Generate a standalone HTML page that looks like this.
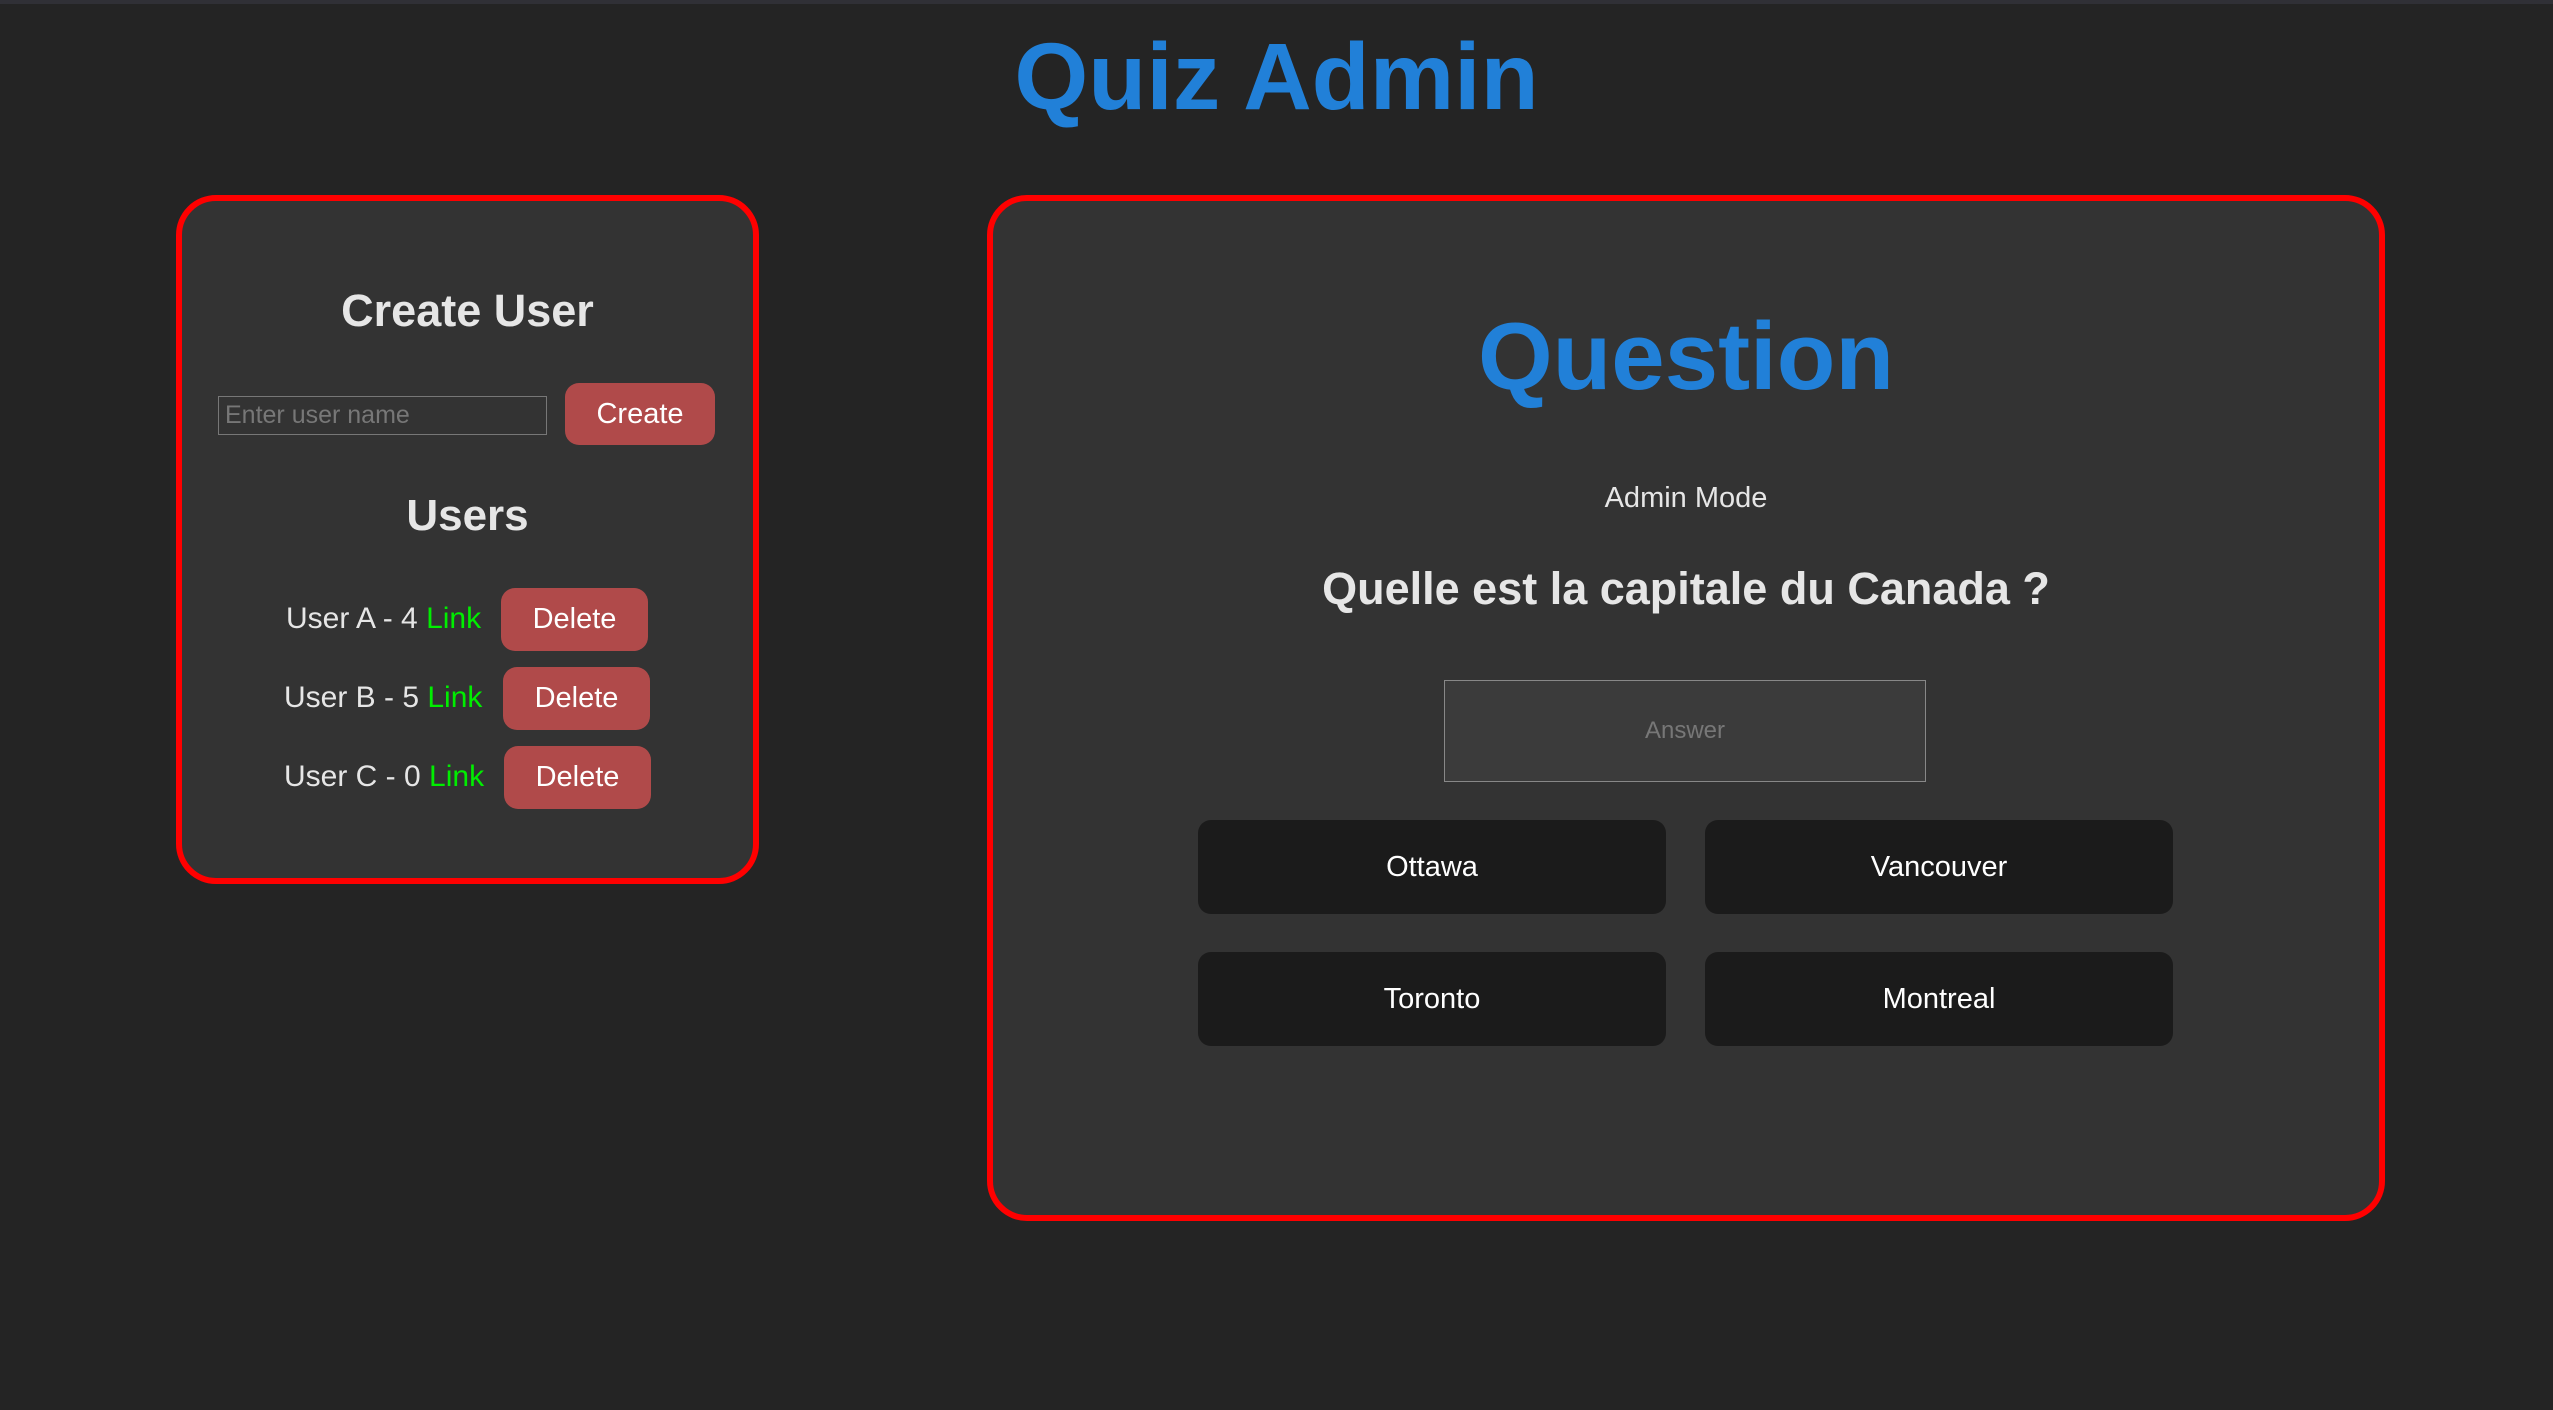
<!DOCTYPE html>
<html><head><style>
*{margin:0;padding:0;box-sizing:border-box}
body{width:2553px;height:1410px;background:#242424;font-family:"Liberation Sans",Arial,sans-serif;position:relative;overflow:hidden;color:#e6e6e6}
.top{position:absolute;left:0;top:0;width:100%;height:4px;background:#303036}
.abs{position:absolute}
h1{position:absolute;left:0;width:100%;top:22px;text-align:center;font-size:95px;font-weight:bold;color:#2180d8;line-height:110px}
.card{position:absolute;background:#333;border:6px solid #ff0000;border-radius:40px}
.ctr{position:absolute;text-align:center;white-space:nowrap}
.btn{position:absolute;background:#b04a4a;border-radius:14px;color:#fff;font-size:29px;display:flex;align-items:center;justify-content:center}
.ans{position:absolute;background:#1b1b1b;border-radius:13px;color:#fff;font-size:29px;display:flex;align-items:center;justify-content:center}
.g{color:#00ee00}
</style></head><body>
<div class="top"></div>
<h1>Quiz Admin</h1>
<div class="card" style="left:176px;top:195px;width:583px;height:689px"></div>
<div class="ctr" style="left:176px;width:583px;top:286px;font-size:45px;font-weight:bold;line-height:50px">Create User</div>
<div class="abs" style="left:218px;top:396px;width:329px;height:39px;border:1.5px solid #777;background:#333;color:#777;font-size:25px;line-height:36px;padding-left:6px">Enter user name</div>
<div class="btn" style="left:565px;top:383px;width:150px;height:62px">Create</div>
<div class="ctr" style="left:176px;width:583px;top:491px;font-size:44px;font-weight:bold;line-height:50px">Users</div>
<div class="abs" style="left:286px;top:601px;font-size:30px;line-height:36px">User A - 4 <span class="g">Link</span></div>
<div class="btn" style="left:501px;top:588px;width:147px;height:63px">Delete</div>
<div class="abs" style="left:284px;top:680px;font-size:30px;line-height:36px">User B - 5 <span class="g">Link</span></div>
<div class="btn" style="left:503px;top:667px;width:147px;height:63px">Delete</div>
<div class="abs" style="left:284px;top:759px;font-size:30px;line-height:36px">User C - 0 <span class="g">Link</span></div>
<div class="btn" style="left:504px;top:746px;width:147px;height:63px">Delete</div>

<div class="card" style="left:987px;top:195px;width:1398px;height:1026px"></div>
<div class="ctr" style="left:987px;width:1398px;top:302px;font-size:96px;font-weight:bold;color:#2180d8;line-height:110px">Question</div>
<div class="ctr" style="left:987px;width:1398px;top:480px;font-size:29px;line-height:36px">Admin Mode</div>
<div class="ctr" style="left:987px;width:1398px;top:564px;font-size:45px;font-weight:bold;line-height:50px">Quelle est la capitale du Canada ?</div>
<div class="abs" style="left:1444px;top:680px;width:482px;height:102px;background:#3b3b3b;border:1.5px solid #888;color:#777;font-size:24px;display:flex;align-items:center;justify-content:center">Answer</div>
<div class="ans" style="left:1198px;top:820px;width:468px;height:94px">Ottawa</div>
<div class="ans" style="left:1705px;top:820px;width:468px;height:94px">Vancouver</div>
<div class="ans" style="left:1198px;top:952px;width:468px;height:94px">Toronto</div>
<div class="ans" style="left:1705px;top:952px;width:468px;height:94px">Montreal</div>
</body></html>
